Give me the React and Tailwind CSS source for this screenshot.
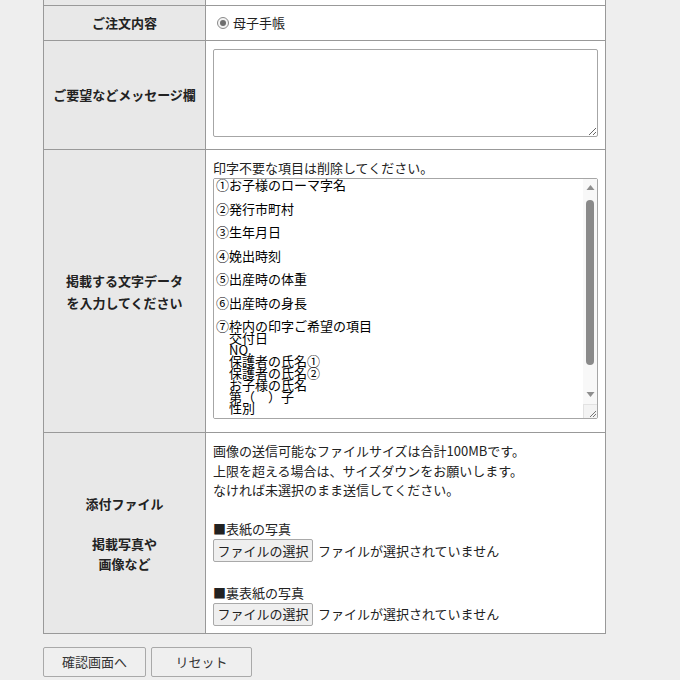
const textData = [
   '①お子様のローマ字名',
   '',
   '②発行市町村',
   '',
   '③生年月日',
   '',
   '④娩出時刻',
   '',
   '⑤出産時の体重',
   '',
   '⑥出産時の身長',
   '',
   '⑦枠内の印字ご希望の項目',
   '　交付日',
   '　NO.',
   '　保護者の氏名①',
   '　保護者の氏名②',
   '　お子様の氏名',
   '　第（　）子',
   '　性別',
   '',
   '',
   '',
   '',
].join('\n')

const FileField = ({ label }) => (
   <>
      <p>{label}</p>
      <div className="flex items-center h-[24px]">
         <span className="h-[23px] w-[100px] flex items-center justify-center bg-[#efefef] border border-[#a9a9a9] rounded-[2px] text-[13px] text-[#222]">ファイルの選択</span>
         <span className="ml-[5px]">ファイルが選択されていません</span>
      </div>
   </>
)

// テキストエリアのスクロールバー（表示用）
const FakeScrollbar = () => (
   <div className="absolute right-px top-px w-[14px] h-[239px] flex flex-col items-center pointer-events-none">
      <div className="w-full h-[225px] bg-[#f8f8f8] flex flex-col items-center">
         <svg width="9" height="14" viewBox="0 0 9 14" className="mt-px">
            <path d="M0.5 10 L4.5 5 L8.5 10 Z" fill="#8f8f8f" />
         </svg>
         <div className="w-[8px] h-[165px] mt-[6px] rounded-full bg-[#8a8a8a]" />
         <div className="flex-1" />
         <svg width="9" height="14" viewBox="0 0 9 14" className="mb-[2px]">
            <path d="M0.5 4 L4.5 9 L8.5 4 Z" fill="#8f8f8f" />
         </svg>
      </div>
      <div className="w-full flex-1 bg-[#f3f3f3] border-t border-l border-[#e2e2e2] flex items-end justify-end">
         <svg width="10" height="10" viewBox="0 0 10 10">
            <path d="M9 3 L3 9 M9 6 L6 9" stroke="#777" strokeWidth="1" />
         </svg>
      </div>
   </div>
)

export default function App() {
   return (
      <div className="min-h-[680px] bg-[#eeeeee] pl-[43px] text-[13px] text-[#222]" style={{ fontFamily: '"Noto Sans CJK JP", "Noto Sans", sans-serif' }}>
         <div className="w-[563px] border-x border-b border-[#999]">
            {/* 前の行の末尾 */}
            <div className="grid grid-cols-[162px_1fr] h-[6px] border-b border-[#999]">
               <div className="bg-[#e8e8e8] border-r border-[#999]" />
               <div className="bg-white" />
            </div>

            {/* ご注文内容 */}
            <div className="grid grid-cols-[162px_1fr] h-[35px] border-b border-[#999]">
               <div className="bg-[#e8e8e8] border-r border-[#999] flex items-center justify-center font-bold">ご注文内容</div>
               <div className="bg-white flex items-center pl-[11px]">
                  <span className="w-[12px] h-[12px] rounded-full border border-[#8a8a8a] bg-[#f4f4f4] flex items-center justify-center">
                     <span className="w-[6px] h-[6px] rounded-full bg-[#6f6f6f]" />
                  </span>
                  <span className="ml-[4px]">母子手帳</span>
               </div>
            </div>

            {/* メッセージ欄 */}
            <div className="grid grid-cols-[162px_1fr] h-[109px] border-b border-[#999]">
               <div className="bg-[#e8e8e8] border-r border-[#999] flex items-center justify-center font-bold">ご要望などメッセージ欄</div>
               <div className="bg-white px-[7px] pt-[8px]">
                  <textarea className="block w-[385px] h-[88px] border border-[#a6a6a6] rounded-[2px] bg-white outline-none" />
               </div>
            </div>

            {/* 文字データ */}
            <div className="grid grid-cols-[162px_1fr] h-[283px] border-b border-[#999]">
               <div className="bg-[#e8e8e8] border-r border-[#999] flex items-center justify-center text-center font-bold leading-[22px] pt-[1px]">
                  掲載する文字データ
                  <br />
                  を入力してください
               </div>
               <div className="bg-white px-[7px] pt-[9px]">
                  <p className="leading-[18px]">印字不要な項目は削除してください。</p>
                  <div className="relative w-[385px] mt-px">
                     <textarea
                        className="block w-[385px] h-[241px] border border-[#a6a6a6] rounded-[2px] bg-white outline-none pl-[2px] pr-[16px] py-0 text-[13px] leading-[11.75px] text-black"
                        defaultValue={textData}
                     />
                     <FakeScrollbar />
                  </div>
               </div>
            </div>

            {/* 添付ファイル */}
            <div className="grid grid-cols-[162px_1fr] h-[200px]">
               <div className="bg-[#e8e8e8] border-r border-[#999] flex flex-col items-center justify-center text-center font-bold leading-[20px] pt-[1px]">
                  <p>添付ファイル</p>
                  <p className="mt-[20px]">掲載写真や</p>
                  <p>画像など</p>
               </div>
               <div className="bg-white px-[7px] pt-[8px] leading-[19.5px]">
                  <p>画像の送信可能なファイルサイズは合計100MBです。</p>
                  <p>上限を超える場合は、サイズダウンをお願いします。</p>
                  <p>なければ未選択のまま送信してください。</p>
                  <div className="h-[19.5px]" />
                  <FileField label="■表紙の写真" />
                  <div className="h-[20px]" />
                  <FileField label="■裏表紙の写真" />
               </div>
            </div>
         </div>

         {/* ボタン */}
         <div className="flex gap-[5px] mt-[13px] pb-[4px]">
            <button className="w-[103px] h-[30px] bg-[#efefef] border border-[#a9a9a9] rounded-[2px] text-[13px] text-[#333]">確認画面へ</button>
            <button className="w-[101px] h-[30px] bg-[#efefef] border border-[#a9a9a9] rounded-[2px] text-[13px] text-[#333]">リセット</button>
         </div>
      </div>
   )
}
